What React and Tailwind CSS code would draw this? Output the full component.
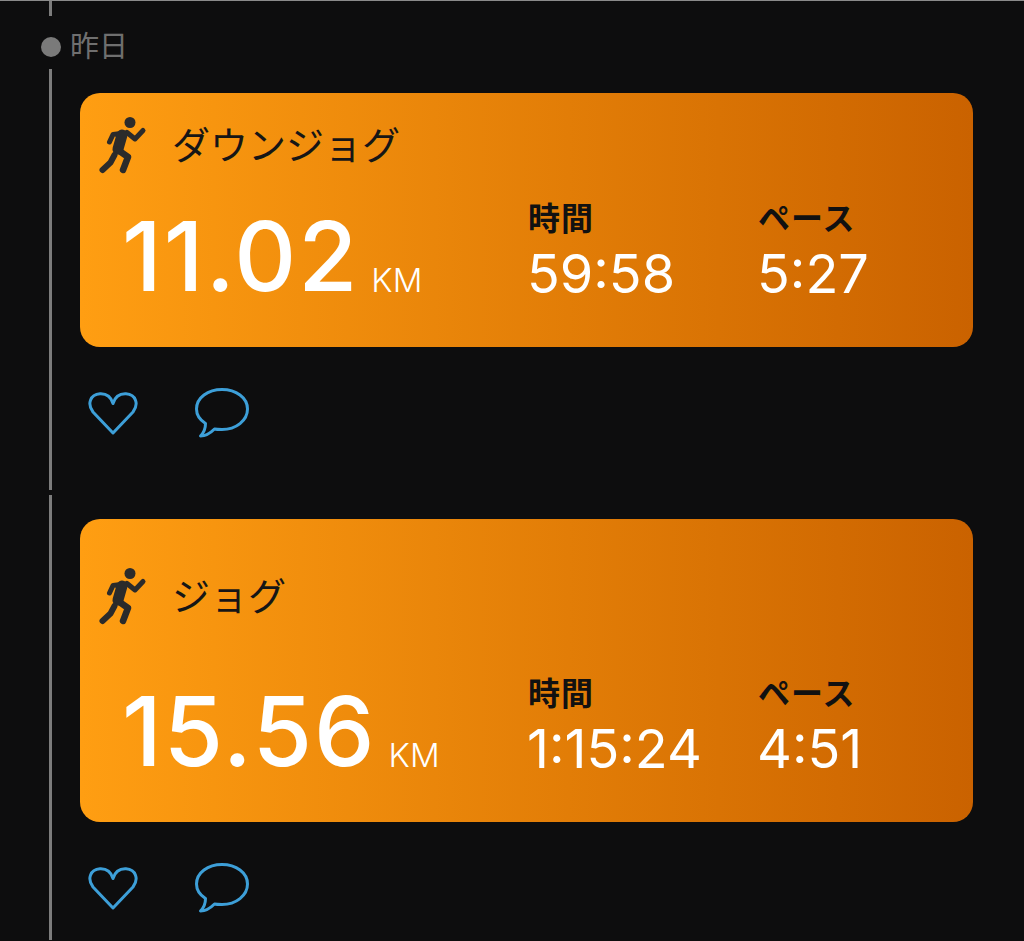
import React from "react";

const RunnerIcon = () => (
  <svg width="48" height="58" viewBox="0 0 48 58" fill="none" className="shrink-0">
    <circle cx="31" cy="6.5" r="5.5" fill="#2b2b2b" />
    <g stroke="#2b2b2b" strokeLinecap="round" strokeLinejoin="round">
      <path d="M26 17L14 18.5L10.5 26" strokeWidth="5" />
      <path d="M28 16.5L36 23L44 14.5" strokeWidth="5" />
      <path d="M23 19L19 33" strokeWidth="11" />
      <path d="M19 34L29 41L24 54" strokeWidth="6.5" />
      <path d="M15.5 39L11.5 46.5L3.5 54" strokeWidth="6" />
    </g>
  </svg>
);

const HeartIcon = () => (
  <svg width="50" height="43" viewBox="0 0 50 43" fill="none">
    <path
      d="M25 41L5 20C-1 12 2 2.5 12 1.8C18 1.5 23 5 25 11.5C27 5 32 1.5 38 1.8C48 2.5 51 12 45 20Z"
      stroke="#3d9fd8"
      strokeWidth="3"
      strokeLinejoin="round"
    />
  </svg>
);

const CommentIcon = () => (
  <svg width="54" height="50" viewBox="0 0 54 50" fill="none">
    <path
      d="M27 1.5C13 1.5 1.5 9.5 1.5 21C1.5 27 5 32 10.5 35.5C10.5 40 8.5 45 5.5 48C11.5 48 15.5 45 19.5 41C21.5 41.5 24 41.5 27 41.5C41 41.5 52.5 32.5 52.5 21C52.5 9.5 41 1.5 27 1.5Z"
      stroke="#3d9fd8"
      strokeWidth="3"
      strokeLinejoin="round"
    />
  </svg>
);

const Stat = ({ label, value }) => (
  <div className="flex flex-col -ml-[1px]">
    <span className="text-[32px] leading-[36px] tracking-[1px] font-semibold text-[#111]">{label}</span>
    <span className="text-[54px] leading-[56px] mt-[9px] -ml-[1px] text-white">{value}</span>
  </div>
);

const ActivityCard = ({ title, distance, time, pace, className }) => (
  <div className={`flex flex-col rounded-[20px] bg-gradient-to-r from-[#ff9e12] to-[#ca6200] ${className}`}>
    <div className="flex items-center pl-[19px]">
      <RunnerIcon />
      <span className="ml-[25px] text-[38px] leading-[48px] font-normal text-[#161616]">{title}</span>
    </div>
    <div className="mt-auto pb-[45px] pl-[42px] grid grid-cols-[407px_230px_1fr] items-end">
      <div className="flex items-end">
        <span className="text-[96px] leading-[96px] -mb-[2px] font-medium text-white tracking-[2px]">{distance}</span>
        <span className="ml-[12px] mb-[2px] text-[33px] leading-[40px] font-light text-white">KM</span>
      </div>
      <Stat label="時間" value={time} />
      <Stat label="ペース" value={pace} />
    </div>
  </div>
);

const ActionRow = () => (
  <div className="flex items-center pl-[8px] mt-[41px]">
    <HeartIcon />
    <div className="ml-[57px]">
      <CommentIcon />
    </div>
  </div>
);

export default function App() {
  return (
    <div className="w-full h-[941px] overflow-hidden flex bg-[#0d0d0e] border-t border-[#8a8a8a] font-['Inter','Noto_Sans_CJK_JP',sans-serif]">
      <div className="w-[70px] shrink-0 flex flex-col items-start">
        <div className="ml-[49px] w-[3px] h-[15px] bg-[#7c7c7c]" />
        <div className="ml-[41px] mt-[21px] w-[20px] h-[20px] rounded-full bg-[#7a7a7a]" />
        <div className="ml-[49px] mt-[12px] w-[3px] h-[421px] bg-[#7c7c7c]" />
        <div className="ml-[49px] mt-[5px] w-[3px] h-[445px] bg-[#7c7c7c]" />
      </div>
      <div className="flex-1 flex flex-col">
        <div className="mt-[26px] h-[40px] text-[29px] leading-[40px] text-[#6f6f6f]">昨日</div>
        <div className="mt-[26px] ml-[10px] mr-[51px]">
          <ActivityCard
            title="ダウンジョグ"
            distance="11.02"
            time="59:58"
            pace="5:27"
            className="h-[254px] pt-[23px]"
          />
          <ActionRow />
          <div className="mt-[81px]">
            <ActivityCard
              title="ジョグ"
              distance="15.56"
              time="1:15:24"
              pace="4:51"
              className="h-[303px] pt-[48px]"
            />
          </div>
          <ActionRow />
        </div>
      </div>
    </div>
  );
}
